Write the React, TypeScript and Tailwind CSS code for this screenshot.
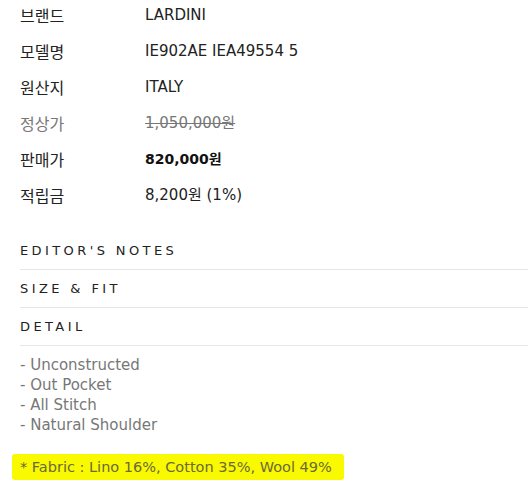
import React from "react";

const rows: { label: string; value: React.ReactNode; muted?: boolean }[] = [
  { label: "브랜드", value: "LARDINI" },
  { label: "모델명", value: "IE902AE IEA49554 5" },
  { label: "원산지", value: "ITALY" },
  { label: "정상가", value: <span className="line-through text-[#777]">1,050,000원</span>, muted: true },
  { label: "판매가", value: <span className="text-[14px] font-bold text-[#111]">820,000원</span> },
  { label: "적립금", value: "8,200원 (1%)" },
];

export default function App() {
  return (
    <div
      className="w-[528px] h-[493px] bg-white overflow-hidden text-[#222]"
      style={{ fontFamily: '"DejaVu Sans", "Noto Sans CJK KR", sans-serif' }}
    >
      <div className="mt-[-3px] flex flex-col">
        {rows.map((r) => (
          <div key={r.label} className="flex h-[36px] items-center text-[15px]">
            <div
              className={`w-[145px] pl-[20px] text-[16px] ${r.muted ? "text-[#777]" : "text-[#222]"}`}
              style={{ fontFamily: '"Noto Sans CJK KR", sans-serif' }}
            >
              {r.label}
            </div>
            <div className="text-[#222]">{r.value}</div>
          </div>
        ))}
      </div>
      <div className="mt-[19px] ml-[20px] flex flex-col">
        {["EDITOR'S NOTES", "SIZE & FIT", "DETAIL"].map((t) => (
          <div
            key={t}
            className="flex h-[38px] items-center border-b border-[#e6e6e6] text-[13px] tracking-[3.4px] text-[#222]"
          >
            {t}
          </div>
        ))}
        <div className="mt-[9px] flex flex-col text-[15px] leading-[20px] text-[#777]">
          <div>- Unconstructed</div>
          <div>- Out Pocket</div>
          <div>- All Stitch</div>
          <div>- Natural Shoulder</div>
        </div>
        <div className="mt-[19px] text-[14.5px] leading-[20px] text-[#6a6a3a]">
          <span className="ml-[-8px] inline-block bg-[#f9f900] py-[3px] pl-[8px] pr-[12px] rounded-[3px]">
            * Fabric : Lino 16%, Cotton 35%, Wool 49%
          </span>
        </div>
      </div>
    </div>
  );
}
